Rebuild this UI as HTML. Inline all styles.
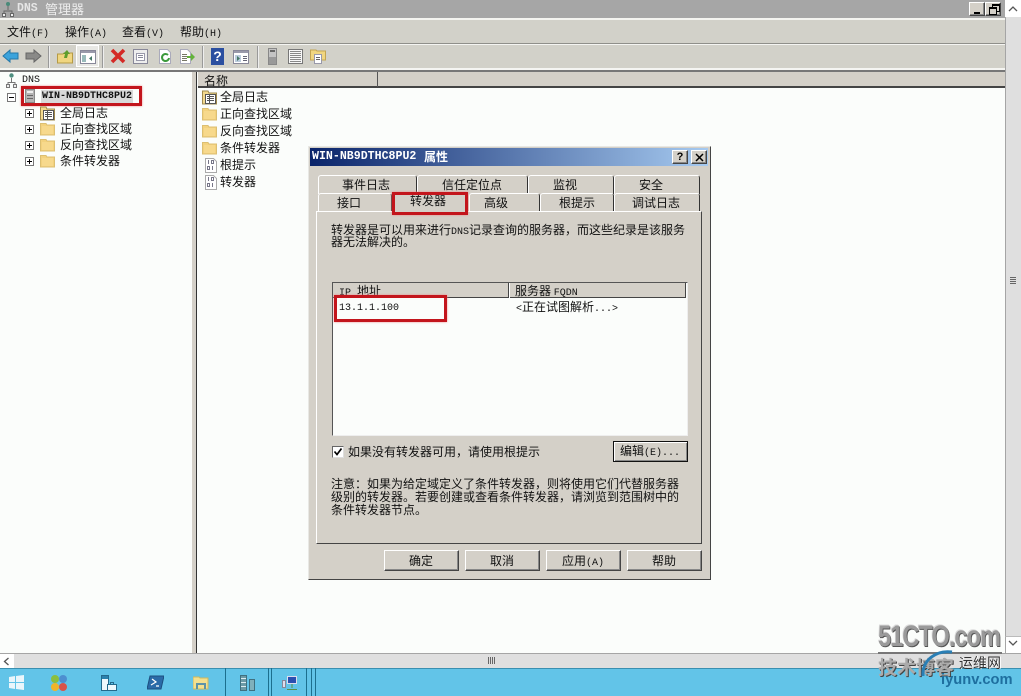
<!DOCTYPE html>
<html lang="zh"><head><meta charset="utf-8"><title>DNS 管理器</title>
<style>
html,body{margin:0;padding:0}
body{width:1021px;height:696px;overflow:hidden;position:relative;background:#fbfdfb;font:12px/14px "WenQuanYi Zen Hei","Noto Sans CJK SC","Liberation Sans",sans-serif;color:#111}
div,svg{position:absolute}
.t{white-space:nowrap;height:14px}
.m{font-family:"Liberation Mono",monospace;font-size:10px}
.tab{background:#d4d0c8;border:1px solid #fff;border-bottom:0;border-right:1px solid #333;border-radius:3px 3px 0 0;box-sizing:border-box}
.btn{background:#d4d0c8;box-sizing:border-box;border:1px solid;border-color:#fff #444 #444 #fff;box-shadow:inset -1px -1px 0 #888}
.sep{width:1px;height:22px;top:46px;background:#999;box-shadow:1px 0 0 #eee}
.r{border:3px solid #c3151c;box-sizing:border-box;box-shadow:0 0 2px #e88}
.b{width:9px;height:9px;box-sizing:border-box;border:1px solid #777;background:#fff}
.b:before{content:"";position:absolute;left:1px;top:3px;width:5px;height:1px;background:#000}
.p:after{content:"";position:absolute;left:3px;top:1px;width:1px;height:5px;background:#000}
.ts{top:668px;height:28px;width:1px;background:#1c6f8e}
</style></head><body>
<svg width="0" height="0" style="position:absolute"><defs>
<symbol id="fo" viewBox="0 0 15 14"><path d="M.5 13V1.500h5.500l1 1.500h7.500v10z" fill="#f3d27e" stroke="#dcbf72" stroke-width="1"/><path d="M2 4h11v8H2z" fill="#f7d98c"/></symbol>
<symbol id="lg" viewBox="0 0 15 15"><path d="M.5 14V1h5.500l1 2h7.500v11z" fill="#f3d98e" stroke="#a18a4c"/><rect x="3.500" y="4.500" width="10" height="9" fill="#fff" stroke="#555"/><path d="M5 6.500h7M5 8.500h7M5 10.500h7M7.500 5v8" stroke="#555" fill="none"/></symbol>
<symbol id="bn" viewBox="0 0 14 15"><path d="M1.500 .5h8l3 3v11h-11z" fill="#fff" stroke="#aaa"/><path d="M4.500 2v4M7.500 2.500h2v3h-2zM3.500 8.500h2v3h-2zM8.500 8v4" stroke="#778" fill="none"/></symbol>
<symbol id="sv" viewBox="0 0 10 14"><rect x=".5" y=".5" width="9" height="13" fill="#b4b4b4" stroke="#888"/><rect x="2" y="2" width="6" height="2" fill="#eee"/><rect x="2" y="6" width="6" height="1" fill="#666"/><rect x="2" y="9" width="6" height="1" fill="#666"/></symbol>
</defs></svg>

<!-- title bar -->
<div style="left:0;top:0;width:1005px;height:18px;background:#a6a6a6"></div>
<svg style="left:2px;top:1px" width="12" height="16" viewBox="0 0 12 16"><circle cx="6" cy="3" r="2" fill="#4a8a7a"/><path d="M6 5v4M2 13v-3h8v3" stroke="#666" fill="none"/><rect x=".5" y="12.500" width="3" height="3" fill="#eee" stroke="#666"/><rect x="8.500" y="12.500" width="3" height="3" fill="#eee" stroke="#666"/></svg>
<div class="t m" style="left:17px;top:2px;color:#e6e6e6;font-weight:bold;font-size:11.500px">DNS</div>
<div class="t" style="left:45px;top:2px;color:#eee;font-size:13px">管理器</div>
<div class="btn" style="left:969px;top:2px;width:16px;height:14px"><div style="left:4px;top:9px;width:6px;height:2px;background:#000"></div></div>
<div class="btn" style="left:985px;top:2px;width:16px;height:14px"><div style="left:6px;top:1px;width:6px;height:5px;border:1px solid #000;border-top-width:2px"></div><div style="left:3px;top:4px;width:6px;height:5px;border:1px solid #000;border-top-width:2px;background:#d4d0c8"></div></div>

<!-- menu bar -->
<div style="left:0;top:18px;width:1005px;height:54px;background:#d2d1c9"></div>
<div style="left:0;top:18px;width:1005px;height:2px;background:#f4f4f0"></div>
<div style="left:0;top:43px;width:1005px;height:1px;background:#8f8f8a"></div>
<div style="left:0;top:44px;width:1005px;height:1px;background:#f5f5f2"></div>
<div style="left:0;top:68px;width:1005px;height:2px;background:#f5f5f2"></div>
<div style="left:0;top:70px;width:1005px;height:2px;background:#777"></div>
<div class="t" style="left:7px;top:25px">文件<span class="m">(F)</span></div>
<div class="t" style="left:65px;top:25px">操作<span class="m">(A)</span></div>
<div class="t" style="left:122px;top:25px">查看<span class="m">(V)</span></div>
<div class="t" style="left:180px;top:25px">帮助<span class="m">(H)</span></div>

<!-- toolbar -->
<svg style="left:2px;top:49px" width="17" height="14" viewBox="0 0 17 14"><path d="M1 7l7-6v3h8v6H8v3z" fill="#3ba3dc" stroke="#2477a8"/></svg>
<svg style="left:25px;top:49px" width="17" height="14" viewBox="0 0 17 14"><path d="M16 7L9 1v3H1v6h8v3z" fill="#8a8a88" stroke="#666"/></svg>
<div class="sep" style="left:48px"></div>
<svg style="left:57px;top:49px" width="16" height="15" viewBox="0 0 16 15"><path d="M.5 14V5h5.500l1-1h8.500v10z" fill="#f0d680" stroke="#b59a45"/><path d="M7 9l1-4-2 0 4-4 3 4h-2l-1 4z" fill="#5f9e2d"/></svg>
<div style="left:76px;top:45px;width:23px;height:22px;background:#e8e8e4;border:1px solid #fff;box-sizing:border-box"></div>
<svg style="left:80px;top:50px" width="16" height="14" viewBox="0 0 16 14"><rect x=".5" y=".5" width="15" height="13" fill="#fff" stroke="#889"/><rect x="1" y="1" width="14" height="2" fill="#99a"/><rect x="2" y="5" width="4" height="7" fill="#9bb"/><path d="M12 6v5l-3-2.500z" fill="#476"/></svg>
<div class="sep" style="left:102px"></div>
<svg style="left:110px;top:48px" width="16" height="16" viewBox="0 0 16 16"><path d="M2 2l12 12M14 2L2 14" stroke="#d42a26" stroke-width="3.600"/></svg>
<svg style="left:133px;top:49px" width="15" height="15" viewBox="0 0 15 15"><rect x=".5" y=".5" width="14" height="14" fill="#eee" stroke="#889"/><rect x="3.500" y="4.500" width="8" height="7" fill="#fff" stroke="#99a"/><path d="M5 6.500h5M5 8.500h5" stroke="#889"/></svg>
<svg style="left:158px;top:49px" width="14" height="15" viewBox="0 0 14 15"><path d="M1.500 .5h8l3 3v11h-11z" fill="#fff" stroke="#aab"/><path d="M10 6a3.500 3.500 0 1 0 1 3" fill="none" stroke="#3c9a3c" stroke-width="2"/></svg>
<svg style="left:179px;top:49px" width="17" height="15" viewBox="0 0 17 15"><path d="M1.500 .5h7l3 3v11h-10z" fill="#fff" stroke="#aab"/><path d="M3 5.500h5M3 7.500h5M3 9.500h5M3 11.500h5" stroke="#776"/><path d="M8 7h4V4l4 4-4 4V9H8z" fill="#63b23c"/></svg>
<div class="sep" style="left:202px"></div>
<div style="left:211px;top:48px;width:13px;height:17px;background:#2b4fa0;color:#fff;font:bold 14px/17px 'Liberation Sans',sans-serif;text-align:center">?</div>
<svg style="left:233px;top:50px" width="16" height="14" viewBox="0 0 16 14"><rect x=".5" y=".5" width="15" height="13" fill="#fff" stroke="#889"/><rect x="1" y="1" width="14" height="2" fill="#99a"/><rect x="2" y="5" width="6" height="7" fill="#bcd"/><path d="M4 6v5l3-2.500z" fill="#476"/><path d="M10 6.500h4M10 8.500h4M10 10.500h4" stroke="#667"/></svg>
<div class="sep" style="left:257px"></div>
<svg style="left:268px;top:48px" width="9" height="17" viewBox="0 0 9 17"><rect x=".5" y=".5" width="8" height="16" fill="#c4c4c4" stroke="#888"/><rect x="2" y="2" width="5" height="2" fill="#666"/><rect x="1" y="9" width="7" height="7" fill="#999"/></svg>
<svg style="left:288px;top:49px" width="15" height="15" viewBox="0 0 15 15"><rect x=".5" y=".5" width="14" height="14" fill="#f8f8f8" stroke="#777"/><path d="M2 2.500h11M2 4.500h11M2 6.500h11M2 8.500h11M2 10.500h11M2 12.500h11" stroke="#888"/></svg>
<svg style="left:310px;top:48px" width="16" height="16" viewBox="0 0 16 16"><path d="M.5 12V2h5.500l1 1h8.500v9z" fill="#f0d680" stroke="#c3a552"/><rect x="4.500" y="6.500" width="7" height="9" fill="#fff" stroke="#99a"/><path d="M6 9.500h4M6 11.500h4" stroke="#666"/></svg>

<!-- left tree -->
<div style="left:0;top:72px;width:192px;height:582px;background:#fbfdfb"></div>
<div style="left:192px;top:72px;width:5px;height:582px;background:#d4d0c8;border-right:1px solid #333;box-sizing:border-box"></div>
<svg style="left:6px;top:73px" width="11" height="15" viewBox="0 0 11 15"><circle cx="5.500" cy="2.500" r="2.200" fill="#4f8f80"/><path d="M5.500 5v4M2 12v-2.500h7V12" stroke="#777" fill="none"/><rect x=".5" y="11.500" width="3" height="3" fill="#eee" stroke="#777"/><rect x="7.500" y="11.500" width="3" height="3" fill="#eee" stroke="#777"/></svg>
<div class="t m" style="left:22px;top:74px">DNS</div>
<div class="b" style="left:7px;top:93px"></div>
<svg style="left:25px;top:89px" width="10" height="14"><use href="#sv"/></svg>
<div class="t m" style="left:41px;top:90px;background:#d8d8d8;padding:0 1px;font-weight:bold">WIN-NB9DTHC8PU2</div>
<div class="r" style="left:21px;top:86px;width:121px;height:20px"></div>
<div class="b p" style="left:25px;top:109px"></div><svg style="left:40px;top:106px" width="15" height="15"><use href="#lg"/></svg><div class="t" style="left:60px;top:106px">全局日志</div>
<div class="b p" style="left:25px;top:125px"></div><svg style="left:40px;top:122px" width="15" height="14"><use href="#fo"/></svg><div class="t" style="left:60px;top:122px">正向查找区域</div>
<div class="b p" style="left:25px;top:141px"></div><svg style="left:40px;top:138px" width="15" height="14"><use href="#fo"/></svg><div class="t" style="left:60px;top:138px">反向查找区域</div>
<div class="b p" style="left:25px;top:157px"></div><svg style="left:40px;top:154px" width="15" height="14"><use href="#fo"/></svg><div class="t" style="left:60px;top:154px">条件转发器</div>

<!-- right list -->
<div style="left:198px;top:72px;width:807px;height:16px;background:#d4d0c8;border-bottom:2px solid #444;box-sizing:border-box"></div>
<div style="left:377px;top:72px;width:1px;height:15px;background:#555"></div>
<div class="t" style="left:204px;top:74px">名称</div>
<svg style="left:202px;top:90px" width="15" height="15"><use href="#lg"/></svg><div class="t" style="left:220px;top:90px">全局日志</div>
<svg style="left:202px;top:107px" width="15" height="14"><use href="#fo"/></svg><div class="t" style="left:220px;top:107px">正向查找区域</div>
<svg style="left:202px;top:124px" width="15" height="14"><use href="#fo"/></svg><div class="t" style="left:220px;top:124px">反向查找区域</div>
<svg style="left:202px;top:141px" width="15" height="14"><use href="#fo"/></svg><div class="t" style="left:220px;top:141px">条件转发器</div>
<svg style="left:204px;top:158px" width="14" height="15"><use href="#bn"/></svg><div class="t" style="left:220px;top:158px">根提示</div>
<svg style="left:204px;top:175px" width="14" height="15"><use href="#bn"/></svg><div class="t" style="left:220px;top:175px">转发器</div>

<!-- vertical scrollbar -->
<div style="left:1005px;top:0;width:16px;height:654px;background:#dfdfdf;border-left:1px solid #a5a5a5;box-sizing:border-box"></div>
<div style="left:1005px;top:0;width:16px;height:17px;background:#fff"></div>
<svg style="left:1008px;top:5px" width="10" height="7"><path d="M1 6l4-4 4 4" fill="none" stroke="#555" stroke-width="1.300"/></svg>
<div style="left:1010px;top:277px;width:6px;height:7px;background:repeating-linear-gradient(#666 0 1px,#dfdfdf 1px 2px)"></div>
<div style="left:1005px;top:636px;width:16px;height:18px;background:#fff;border-left:1px solid #a5a5a5;border-top:1px solid #bbb;box-sizing:border-box"></div>
<svg style="left:1008px;top:640px" width="10" height="7"><path d="M1 1l4 4 4-4" fill="none" stroke="#555" stroke-width="1.300"/></svg>

<!-- horizontal scrollbar -->
<div style="left:0;top:653px;width:1021px;height:15px;background:#dfdfdf;border-top:1px solid #a5a5a5;box-sizing:border-box"></div>
<div style="left:0;top:654px;width:14px;height:14px;background:#fff"></div>
<svg style="left:3px;top:657px" width="7" height="9"><path d="M5.500 1l-4 3.500 4 3.500" fill="none" stroke="#555" stroke-width="1.300"/></svg>
<div style="left:488px;top:657px;width:8px;height:7px;background:repeating-linear-gradient(90deg,#666 0 1px,#dfdfdf 1px 2px)"></div>

<!-- taskbar -->
<div style="left:0;top:668px;width:1021px;height:28px;background:#62c4e8;border-top:1px solid #3a8fb0;box-sizing:border-box"></div>
<svg style="left:9px;top:675px" width="15" height="15" viewBox="0 0 15 15"><path d="M0 2l6-1v6H0zM7 1l8-1v7H7zM0 8h6v6l-6-1zM7 8h8v7l-8-1z" fill="#eaf6fb"/></svg>
<svg style="left:50px;top:674px" width="18" height="18" viewBox="0 0 18 18"><circle cx="5" cy="5" r="4" fill="#8bbf3f"/><circle cx="13" cy="5" r="4" fill="#4d8fd0"/><circle cx="5" cy="13" r="4" fill="#f0b429"/><circle cx="13" cy="13" r="4" fill="#d9534a"/></svg>
<svg style="left:100px;top:674px" width="18" height="18" viewBox="0 0 18 18"><rect x="1.500" y="1.500" width="7" height="15" fill="#eef8fc" stroke="#246a8c"/><rect x="2" y="2" width="6" height="3" fill="#2b81ad"/><rect x="7.500" y="10.500" width="9" height="6" fill="#eef8fc" stroke="#246a8c"/><rect x="10.500" y="8.500" width="3" height="2" fill="none" stroke="#246a8c"/></svg>
<svg style="left:147px;top:675px" width="17" height="15" viewBox="0 0 17 15"><path d="M3 1h14l-3 13H0z" fill="#2b6ba8" stroke="#1c4f80"/><path d="M5 4l4 3-5 3M9 11h3" stroke="#fff" stroke-width="1.200" fill="none"/></svg>
<svg style="left:193px;top:675px" width="16" height="15" viewBox="0 0 16 15"><path d="M0 14V2h6l1 1h8v11z" fill="#f3e08e" stroke="#cdb860"/><path d="M4 14V9h8v5" fill="none" stroke="#5d94a8" stroke-width="2"/></svg>
<div class="ts" style="left:225px"></div>
<svg style="left:239px;top:674px" width="17" height="18" viewBox="0 0 17 18"><rect x="1.500" y="1.500" width="6" height="15" fill="#6b9aa6" stroke="#3f7080"/><path d="M2 4.500h5M2 8.500h5M2 12.500h5" stroke="#dcecf0"/><rect x="10.500" y="5.500" width="5" height="11" fill="#7fb0bc" stroke="#3f7080"/></svg>
<div class="ts" style="left:268px"></div>
<div class="ts" style="left:271px"></div>
<svg style="left:282px;top:675px" width="16" height="16" viewBox="0 0 16 16"><rect x=".5" y="5.500" width="3" height="7" fill="#dde" stroke="#889"/><rect x="5.500" y="1.500" width="9" height="7" fill="#2a4fb0" stroke="#dde"/><path d="M10 9v4M5 14.500h10" stroke="#5a8f4a"/></svg>
<div class="ts" style="left:306px"></div>
<div class="ts" style="left:311px"></div>
<div class="ts" style="left:315px"></div>

<!-- dialog -->
<div style="left:308px;top:146px;width:403px;height:434px;background:#d4d0c8;border:1px solid;border-color:#e8e8e4 #444 #444 #e8e8e4;box-sizing:border-box"></div>
<div style="left:310px;top:148px;width:398px;height:18px;background:linear-gradient(90deg,#0a246a,#a6caf0)"></div>
<div class="t m" style="left:312px;top:150px;color:#fff;font-weight:bold;font-size:11.600px">WIN-NB9DTHC8PU2</div>
<div class="t" style="left:424px;top:150px;color:#fff;font-weight:bold">属性</div>
<div class="btn" style="left:672px;top:150px;width:16px;height:14px;font:bold 11px/12px 'Liberation Sans',sans-serif;text-align:center;color:#000">?</div>
<div class="btn" style="left:691px;top:150px;width:16px;height:14px"><svg style="left:3px;top:2px" width="9" height="9"><path d="M1 1l7 7M8 1l-7 7" stroke="#000" stroke-width="1.500"/></svg></div>

<div class="tab" style="left:318px;top:175px;width:99px;height:19px"></div>
<div class="tab" style="left:417px;top:175px;width:111px;height:19px"></div>
<div class="tab" style="left:528px;top:175px;width:86px;height:19px"></div>
<div class="tab" style="left:614px;top:175px;width:86px;height:19px"></div>
<div class="t" style="left:342px;top:178px">事件日志</div>
<div class="t" style="left:442px;top:178px">信任定位点</div>
<div class="t" style="left:553px;top:178px">监视</div>
<div class="t" style="left:639px;top:178px">安全</div>

<div style="left:316px;top:211px;width:386px;height:333px;background:#d4d0c8;border:1px solid;border-color:#fff #444 #444 #fff;box-sizing:border-box"></div>
<div class="tab" style="left:318px;top:193px;width:74px;height:18px"></div>
<div class="tab" style="left:469px;top:193px;width:71px;height:18px"></div>
<div class="tab" style="left:540px;top:193px;width:74px;height:18px"></div>
<div class="tab" style="left:614px;top:193px;width:86px;height:18px"></div>
<div style="left:393px;top:193px;width:75px;height:20px;background:#d4d0c8"></div>
<div class="t" style="left:337px;top:196px">接口</div>
<div class="t" style="left:410px;top:194px">转发器</div>
<div class="t" style="left:484px;top:196px">高级</div>
<div class="t" style="left:559px;top:196px">根提示</div>
<div class="t" style="left:632px;top:196px">调试日志</div>
<div class="r" style="left:392px;top:192px;width:76px;height:23px"></div>

<div class="t" style="left:331px;top:223px">转发器是可以用来进行<span class="m">DNS</span>记录查询的服务器，而这些纪录是该服务</div>
<div class="t" style="left:331px;top:235px">器无法解决的。</div>

<div style="left:332px;top:282px;width:356px;height:154px;background:#fbfdfb;border:1px solid;border-color:#555 #eee #eee #555;box-sizing:border-box"></div>
<div style="left:333px;top:283px;width:353px;height:15px;background:#d4d0c8;border-bottom:1px solid #444;border-right:1px solid #444;box-sizing:border-box"></div>
<div style="left:508px;top:283px;width:1px;height:15px;background:#444;box-shadow:1px 0 0 #fff"></div>
<div class="t" style="left:339px;top:284px"><span class="m">IP </span>地址</div>
<div class="t" style="left:515px;top:284px">服务器 <span class="m">FQDN</span></div>
<div class="t m" style="left:339px;top:302px">13.1.1.100</div>
<div class="t" style="left:516px;top:300px"><span class="m">&lt;</span>正在试图解析<span class="m">...&gt;</span></div>
<div class="r" style="left:334px;top:295px;width:113px;height:27px"></div>

<div style="left:332px;top:446px;width:12px;height:12px;background:#fff;border:1px solid;border-color:#666 #ddd #ddd #666;box-sizing:border-box"></div>
<svg style="left:333px;top:447px" width="10" height="10"><path d="M1.500 4.500l2.500 3 4.500-6" fill="none" stroke="#000" stroke-width="1.700"/></svg>
<div class="t" style="left:348px;top:445px">如果没有转发器可用，请使用根提示</div>
<div class="btn" style="left:613px;top:441px;width:75px;height:21px;border:1px solid #111;box-shadow:inset 1px 1px 0 #fff,inset -1px -1px 0 #888"></div>
<div class="t" style="left:620px;top:444px">编辑<span class="m">(E)...</span></div>

<div class="t" style="left:331px;top:477px">注意：如果为给定域定义了条件转发器，则将使用它们代替服务器</div>
<div class="t" style="left:331px;top:490px">级别的转发器。若要创建或查看条件转发器，请浏览到范围树中的</div>
<div class="t" style="left:331px;top:503px">条件转发器节点。</div>

<div class="btn" style="left:384px;top:550px;width:75px;height:21px"></div><div class="t" style="left:409px;top:554px">确定</div>
<div class="btn" style="left:465px;top:550px;width:75px;height:21px"></div><div class="t" style="left:490px;top:554px">取消</div>
<div class="btn" style="left:546px;top:550px;width:75px;height:21px"></div><div class="t" style="left:562px;top:554px">应用<span class="m">(A)</span></div>
<div class="btn" style="left:627px;top:550px;width:75px;height:21px"></div><div class="t" style="left:652px;top:554px">帮助</div>

<!-- watermark -->
<div class="t" style="left:878px;top:622px;height:30px;font:bold 30px/30px 'Liberation Sans',sans-serif;color:#9a9a9a;letter-spacing:-1.300px;transform-origin:0 50%;transform:scaleX(.79);text-shadow:1px 1px 0 #555,-1px -1px 0 #ddd">51CTO.com</div>
<div style="left:878px;top:652px;width:124px;height:2px;background:#777"></div>
<div class="t" style="left:878px;top:656px;height:22px;font-size:19px;line-height:22px;font-weight:bold;color:#aaa;text-shadow:1px 1px 0 #444">技术博客</div>
<div class="t" style="left:959px;top:655px;font-size:14px;line-height:16px;height:16px;color:#333;text-shadow:1px 0 0 #fff">运维网</div>
<svg style="left:918px;top:648px" width="60" height="34" viewBox="0 0 60 34"><path d="M5 28C4 12 18 2 34 4" fill="none" stroke="#2a7fb5" stroke-width="3"/></svg>
<div class="t" style="left:941px;top:671px;height:18px;font:bold 15px/18px 'Liberation Sans',sans-serif;color:#1e6f9f;transform-origin:0 50%;transform:scaleX(.98)">iyunv.com</div>
</body></html>
